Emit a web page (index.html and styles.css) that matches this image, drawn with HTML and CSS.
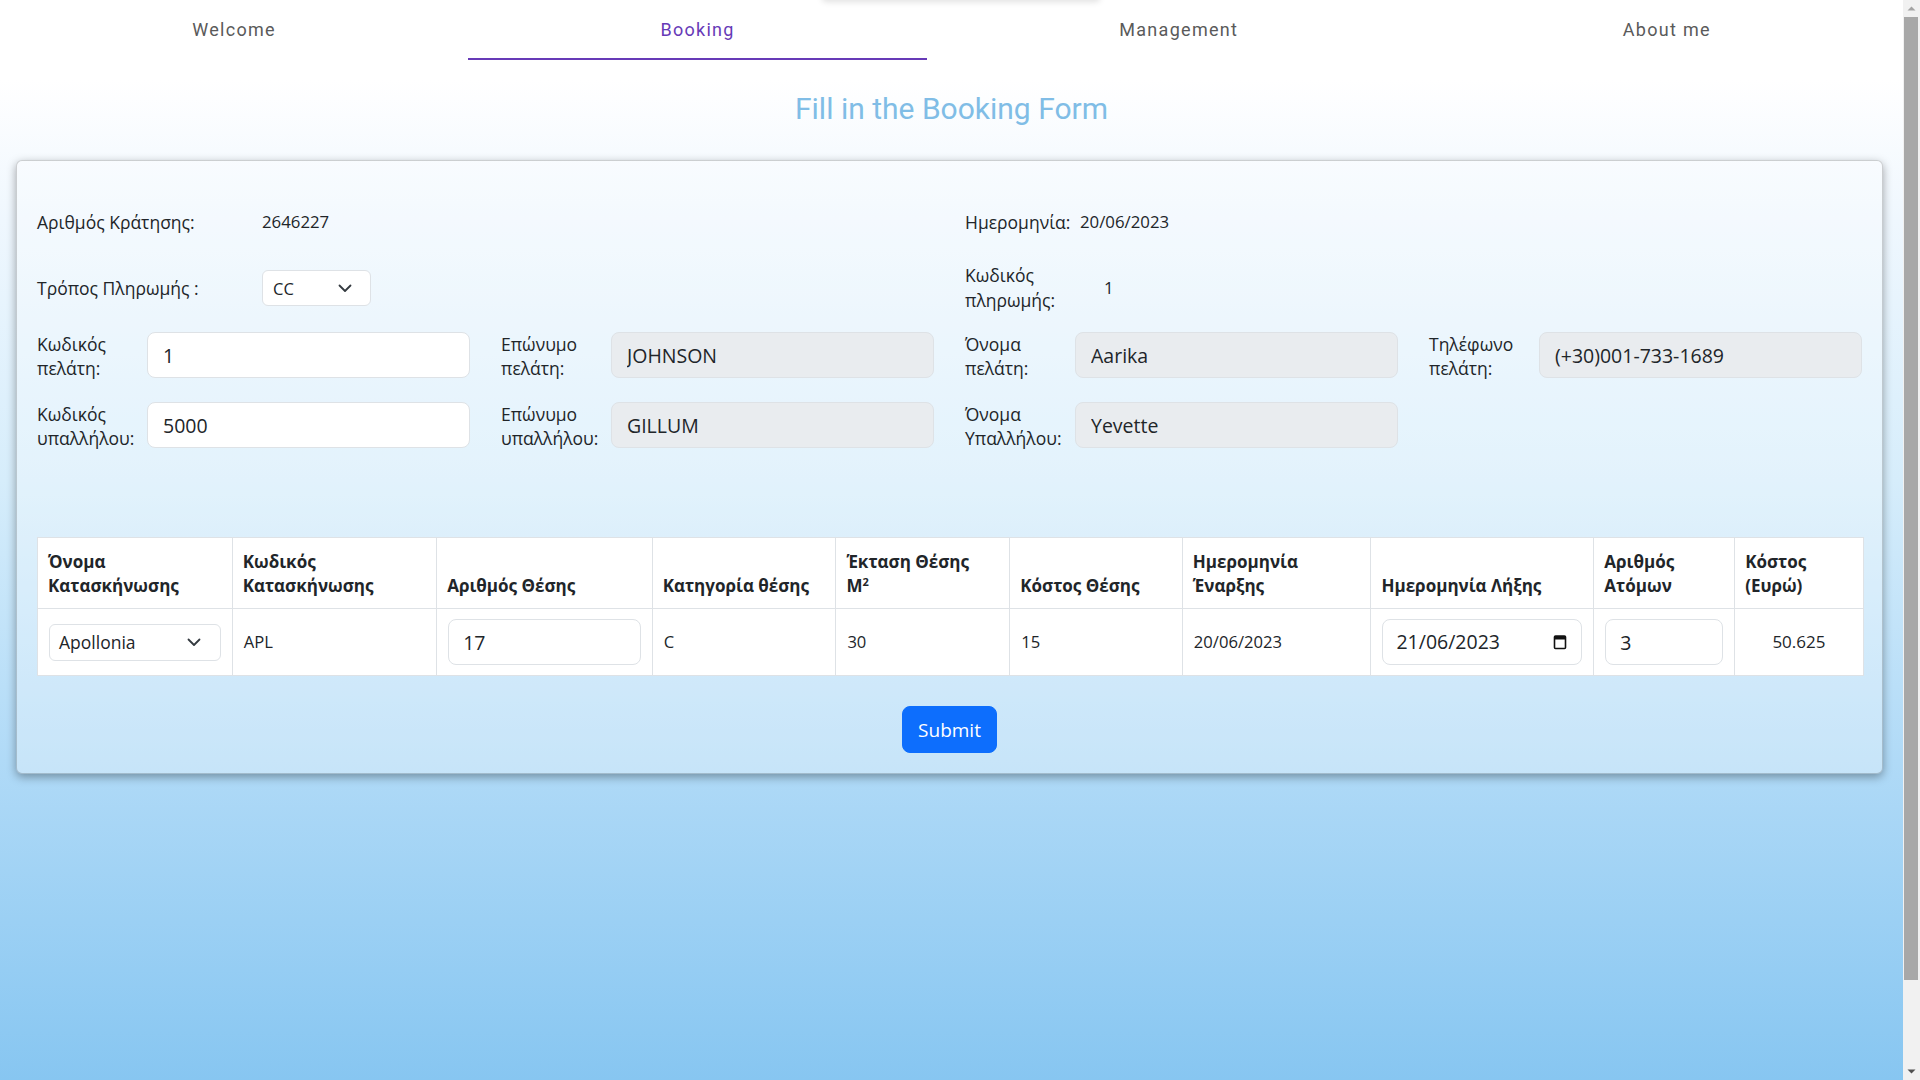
FILE: index.html
```html
<!DOCTYPE html>
<html lang="el">
<head>
<meta charset="utf-8">
<title>Booking</title>
<link rel="stylesheet" href="styles.css">
</head>
<body>
<div class="ghost"></div>
<nav class="tabs">
  <div class="tab">Welcome</div>
  <div class="tab active">Booking</div>
  <div class="tab">Management</div>
  <div class="tab">About me</div>
</nav>
<h1 class="title">Fill in the Booking Form</h1>
<main class="card">
  <div class="info r1">
    <div class="half">
      <span class="lbl lbl-wide">Αριθμός Κράτησης:</span>
      <span class="val">2646227</span>
    </div>
    <div class="half">
      <span class="lbl lbl-date">Ημερομηνία:</span>
      <span class="val">20/06/2023</span>
    </div>
  </div>
  <div class="info r2">
    <div class="half">
      <span class="lbl lbl-wide">Τρόπος Πληρωμής :</span>
      <div class="select sel-cc"><span>CC</span><svg class="chev" width="14" height="9" viewBox="0 0 14 9"><path d="M1.5 1.5 7 7l5.5-5.5" fill="none" stroke="#343a40" stroke-width="1.8" stroke-linecap="round" stroke-linejoin="round"/></svg></div>
    </div>
    <div class="half">
      <span class="lbl lbl-narrow">Κωδικός πληρωμής:</span>
      <span class="val code">1</span>
    </div>
  </div>
  <div class="fields r3">
    <div class="field"><label class="flbl">Κωδικός πελάτη:</label><input class="inp" value="1"></div>
    <div class="field"><label class="flbl">Επώνυμο πελάτη:</label><input class="inp ro" value="JOHNSON" readonly></div>
    <div class="field"><label class="flbl">Όνομα πελάτη:</label><input class="inp ro" value="Aarika" readonly></div>
    <div class="field"><label class="flbl">Τηλέφωνο πελάτη:</label><input class="inp ro" value="(+30)001-733-1689" readonly></div>
  </div>
  <div class="fields r4">
    <div class="field"><label class="flbl">Κωδικός υπαλλήλου:</label><input class="inp" value="5000"></div>
    <div class="field"><label class="flbl">Επώνυμο υπαλλήλου:</label><input class="inp ro" value="GILLUM" readonly></div>
    <div class="field"><label class="flbl">Όνομα Υπαλλήλου:</label><input class="inp ro" value="Yevette" readonly></div>
    <div class="field"></div>
  </div>
  <table class="camps">
    <colgroup>
      <col class="c1"><col class="c2"><col class="c3"><col class="c4"><col class="c5">
      <col class="c6"><col class="c7"><col class="c8"><col class="c9"><col class="c10">
    </colgroup>
    <thead>
      <tr>
        <th>Όνομα<br>Κατασκήνωσης</th>
        <th>Κωδικός<br>Κατασκήνωσης</th>
        <th>Αριθμός Θέσης</th>
        <th>Κατηγορία θέσης</th>
        <th>Έκταση Θέσης<br>M<sup>2</sup></th>
        <th>Κόστος Θέσης</th>
        <th>Ημερομηνία<br>Έναρξης</th>
        <th>Ημερομηνία Λήξης</th>
        <th>Αριθμός<br>Ατόμων</th>
        <th>Κόστος<br>(Ευρώ)</th>
      </tr>
    </thead>
    <tbody>
      <tr>
        <td><div class="select sel-camp"><span>Apollonia</span><svg class="chev" width="14" height="9" viewBox="0 0 14 9"><path d="M1.5 1.5 7 7l5.5-5.5" fill="none" stroke="#343a40" stroke-width="1.8" stroke-linecap="round" stroke-linejoin="round"/></svg></div></td>
        <td>APL</td>
        <td><input class="inp cell-inp" value="17"></td>
        <td>C</td>
        <td>30</td>
        <td>15</td>
        <td>20/06/2023</td>
        <td><div class="inp cell-inp date-inp"><span>21/06/2023</span><svg class="cal" width="14" height="16" viewBox="0 0 14 16"><rect x="1.5" y="2" width="11" height="12.5" rx="1" fill="none" stroke="#111" stroke-width="1.6"/><rect x="1.5" y="2" width="11" height="3.5" fill="#111"/></svg></div></td>
        <td><input class="inp cell-inp" value="3"></td>
        <td class="cost">50.625</td>
      </tr>
    </tbody>
  </table>
  <div class="actions"><button class="submit" type="button">Submit</button></div>
</main>
<div class="scrollbar">
  <div class="sb-btn sb-up"><svg width="17" height="17" viewBox="0 0 17 17"><path d="M4.5 10.5h8l-4-4z" fill="#a3a3a3"/></svg></div>
  <div class="sb-track"><div class="sb-thumb"></div></div>
  <div class="sb-btn sb-down"><svg width="17" height="17" viewBox="0 0 17 17"><path d="M4.5 6.5h8l-4 4z" fill="#505050"/></svg></div>
</div>
</body>
</html>
```

FILE: styles.css
```css
html {
  height: 100%;
  background: linear-gradient(180deg, #ffffff 0px, #ffffff 80px, #eff7fe 220px, #d6edfb 480px, #b0daf7 760px, #87c6f1 1080px);
}

body {
  margin: 0 17px 0 0;
  height: 100%;
  overflow: hidden;
  font-family: "Open Sans", "Noto Sans", sans-serif;
  color: #212529;
  position: relative;
}

.ghost {
  position: absolute;
  top: -40px;
  left: 822px;
  width: 278px;
  height: 40px;
  border-radius: 4px;
  box-shadow: 0 2px 6px rgba(0, 0, 0, 0.12);
}

.scrollbar {
  position: fixed;
  top: 0;
  right: 0;
  width: 17px;
  height: 100%;
  display: flex;
  flex-direction: column;
  background: #f1f1f1;
}

.sb-btn {
  height: 17px;
  flex: none;
}

.sb-btn svg { display: block; }

.sb-track {
  flex: 1;
  padding: 0 2px 83px 1px;
  display: flex;
}

.sb-thumb {
  flex: 1;
  background: #a8a8a8;
}

.tabs {
  display: flex;
  height: 60px;
}

.tab {
  flex: 1 1 auto;
  padding: 0 24px;
  display: flex;
  align-items: center;
  justify-content: center;
  font-family: Roboto, sans-serif;
  font-size: 18px;
  font-weight: 400;
  letter-spacing: 1.3px;
  color: #5a5a5a;
  border-bottom: 2px solid transparent;
}

.tab.active {
  color: #673ab7;
  border-bottom-color: #673ab7;
}

.title {
  margin: 31px 0 33px;
  text-align: center;
  font-family: Roboto, sans-serif;
  font-weight: 400;
  font-size: 30px;
  line-height: 36px;
  color: #80bde6;
}

.card {
  display: block;
  margin: 0 20px 0 16px;
  padding: 20px;
  border: 1px solid rgba(0, 0, 0, 0.18);
  border-radius: 6px;
  background: rgba(255, 255, 255, 0.3);
  box-shadow: 0 3px 10px rgba(0, 0, 0, 0.35);
}

.info {
  display: grid;
  grid-template-columns: 1fr 1fr;
  column-gap: 31px;
}

.r1 { margin-top: 17px; height: 48px; }
.r2 { margin-top: 17px; height: 50px; }

.half {
  display: flex;
  align-items: center;
}

.lbl {
  font-size: 17.5px;
  line-height: 25px;
  flex: none;
}

.lbl-wide { width: 225px; }
.lbl-date { width: 115px; }
.lbl-narrow { width: 110px; margin-right: 29px; }

.val {
  font-size: 16.8px;
  line-height: 24px;
}

.select {
  display: flex;
  align-items: center;
  justify-content: space-between;
  background: #fff;
  border: 1px solid #dee2e6;
  border-radius: 6px;
  box-sizing: border-box;
}

.sel-cc {
  width: 109px;
  height: 36px;
  padding: 0 18px 0 10px;
  font-size: 16.5px;
}

.sel-camp {
  width: 100%;
  height: 37px;
  padding: 0 19px 0 9px;
  font-size: 17.5px;
}

.fields {
  display: grid;
  grid-template-columns: repeat(4, 1fr);
  column-gap: 31px;
}

.r3 { margin-top: 19px; }
.r4 { margin-top: 18px; }

.field {
  display: grid;
  grid-template-columns: 110px 1fr;
  align-items: start;
  min-height: 52px;
}

.flbl {
  padding-top: 0;
  font-size: 17.5px;
  line-height: 24px;
}

.inp {
  box-sizing: border-box;
  height: 46px;
  width: 100%;
  margin: 0;
  padding: 0 15px;
  font-family: "Open Sans", "Noto Sans", sans-serif;
  font-size: 19.5px;
  color: #212529;
  background: #fff;
  border: 1px solid #dee2e6;
  border-radius: 8px;
  outline: none;
}

.inp.ro { background: #e9ecef; }

.camps {
  margin-top: 83px;
  width: 100%;
  table-layout: fixed;
  border-collapse: collapse;
  background: #fff;
}

.c1 { width: 194.7px; }
.c2 { width: 204.5px; }
.c3 { width: 215.5px; }
.c4 { width: 183.7px; }
.c5 { width: 173.9px; }
.c6 { width: 172.6px; }
.c7 { width: 188.6px; }
.c8 { width: 222.9px; }
.c9 { width: 140.8px; }
.c10 { width: 128.6px; }

.camps th,
.camps td {
  border: 1px solid #dee2e6;
  text-align: left;
}

.camps th {
  padding: 12px 8px 10px 10px;
  vertical-align: bottom;
  font-size: 17px;
  font-weight: 700;
  line-height: 24px;
}

.camps th sup {
  font-size: 11px;
  line-height: 0;
  vertical-align: 6px;
}

.camps td {
  padding: 10px 11px;
  vertical-align: middle;
  font-size: 16.6px;
  line-height: 24px;
}

.cell-inp {
  padding: 0 14px;
}

.date-inp {
  display: flex;
  align-items: center;
  justify-content: space-between;
  padding: 0 14px 0 13px;
}

.camps td.cost {
  text-align: center;
  font-size: 17px;
}

.actions {
  margin-top: 30px;
  text-align: center;
}

.submit {
  height: 47px;
  padding: 0 15px;
  font-family: "Open Sans", "Noto Sans", sans-serif;
  font-size: 19px;
  color: #fff;
  background: #0d6efd;
  border: 1px solid #0d6efd;
  border-radius: 8px;
}
```
